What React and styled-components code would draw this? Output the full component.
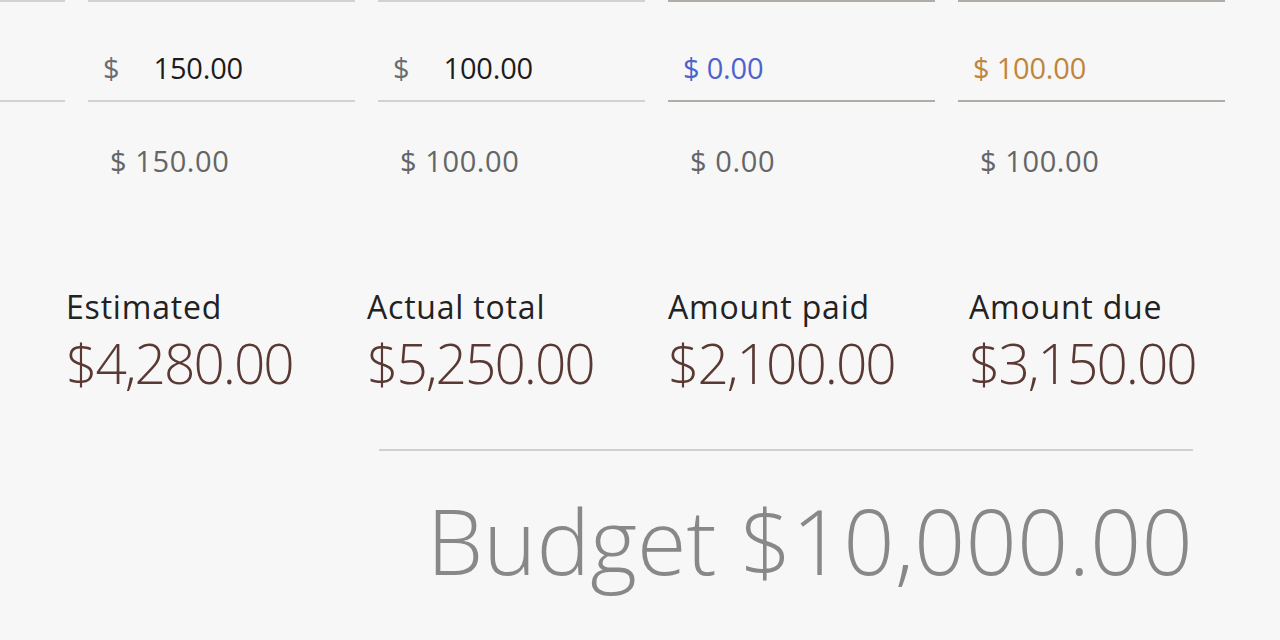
import styled, { createGlobalStyle } from "styled-components";

const GlobalStyle = createGlobalStyle`
  html, body {
    margin: 0;
    padding: 0;
    background: #f7f7f7;
    overflow: hidden;
  }
  body {
    font-family: "Open Sans", "Noto Sans", sans-serif;
    color: #222;
  }
`;

const lines = [
  { tone: "plain" },
  { tone: "plain", prefix: "$", value: "150.00", computed: "$ 150.00" },
  { tone: "plain", prefix: "$", value: "100.00", computed: "$ 100.00" },
  { tone: "paid", value: "$ 0.00", computed: "$ 0.00" },
  { tone: "due", value: "$ 100.00", computed: "$ 100.00" },
];

const totals = [
  { label: "Estimated", amount: "$4,280.00" },
  { label: "Actual total", amount: "$5,250.00" },
  { label: "Amount paid", amount: "$2,100.00" },
  { label: "Amount due", amount: "$3,150.00" },
];

const lineColor = {
  plain: "#d2d2d2",
  paid: "#b1aca5",
  due: "#b1aca5",
};

const valueColor = {
  plain: "#1c1c1c",
  paid: "#4b63cf",
  due: "#c1853b",
};

const App = () => {
  return (
    <>
      <GlobalStyle />
      <Page>
        <FieldGrid>
          {lines.map((line, i) => (
            <PrevEdge key={`e${i}`} $tone={line.tone} />
          ))}
          {lines.map((line, i) => (
            <Field key={`f${i}`} $tone={line.tone}>
              {line.prefix && <Prefix>{line.prefix}</Prefix>}
              <Value $tone={line.tone} $strong={!!line.prefix}>
                {line.value}
              </Value>
            </Field>
          ))}
          {lines.map((line, i) => (
            <Computed key={`c${i}`}>{line.computed}</Computed>
          ))}
        </FieldGrid>

        <Totals>
          {totals.map((t) => (
            <Total key={t.label}>
              <TotalLabel>{t.label}</TotalLabel>
              <TotalAmount>{t.amount}</TotalAmount>
            </Total>
          ))}
        </Totals>

        <BudgetBlock>
          <Budget>Budget $10,000.00</Budget>
        </BudgetBlock>
      </Page>
    </>
  );
};

export default App;

const Page = styled.div`
  width: 1280px;
  height: 640px;
  overflow: hidden;
`;

const FieldGrid = styled.div`
  display: grid;
  grid-template-columns: repeat(5, 267px);
  column-gap: 23px;
  margin-left: -202px;
`;

const PrevEdge = styled.div`
  height: 2px;
  background: ${(p) => lineColor[p.$tone]};
`;

const Field = styled.div`
  height: 100px;
  box-sizing: border-box;
  border-bottom: 2px solid ${(p) => lineColor[p.$tone]};
  display: flex;
  align-items: center;
  padding: 32px 0 0 15px;
  gap: 34px;
`;

const Prefix = styled.span`
  font-size: 29px;
  color: #6a6e72;
`;

const Value = styled.span`
  font-size: 29px;
  font-weight: ${(p) => (p.$strong ? 500 : 400)};
  letter-spacing: -0.2px;
  color: ${(p) => valueColor[p.$tone]};
`;

const Computed = styled.div`
  padding: 39px 0 0 22px;
  height: 42px;
  font-size: 29px;
  letter-spacing: 0.6px;
  color: #656565;
  line-height: 40px;
`;

const Totals = styled.div`
  display: grid;
  grid-template-columns: repeat(4, 301px);
  margin: 104px 0 0 66px;
`;

const Total = styled.div`
  display: flex;
  flex-direction: column;
  gap: 6px;
`;

const TotalLabel = styled.div`
  font-size: 32px;
  font-weight: 500;
  letter-spacing: 0.8px;
  line-height: 40px;
  color: #222;
`;

const TotalAmount = styled.div`
  font-size: 55px;
  font-weight: 300;
  letter-spacing: -2px;
  line-height: 60px;
  color: #5a3934;
`;

const BudgetBlock = styled.div`
  margin: 56px 87px 0 379px;
  border-top: 2px solid #d0d0d0;
  display: flex;
  justify-content: flex-end;
`;

const Budget = styled.div`
  font-size: 90px;
  font-weight: 300;
  letter-spacing: 0.1px;
  line-height: 120px;
  color: #888;
  margin-top: 29px;
`;
